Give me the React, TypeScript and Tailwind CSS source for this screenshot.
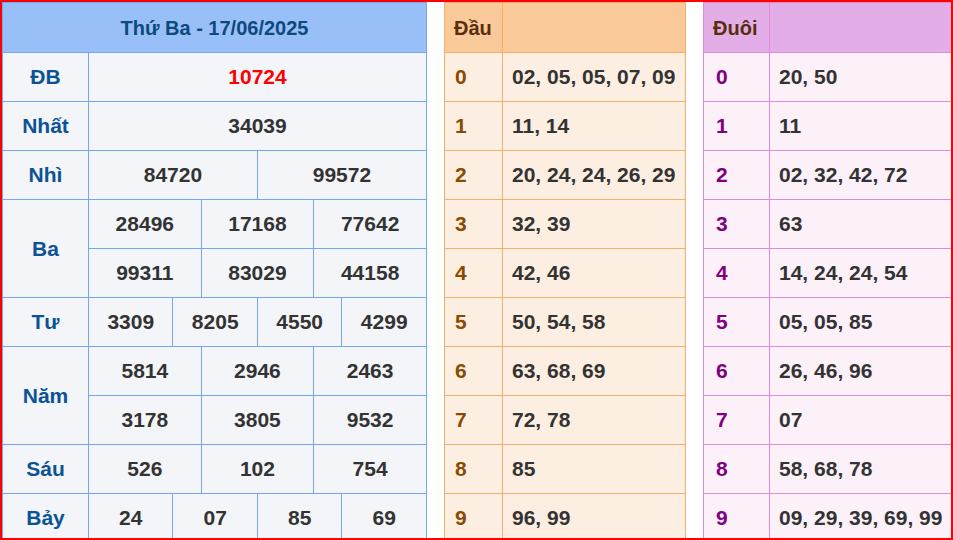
export default function App() {
  const font = { fontFamily: '"Liberation Sans", Arial, sans-serif' };
  const td = "border border-[#74a7f0] text-center h-[49px] p-0";
  const lab = td + " text-[#0b5394]";
  const num = td + " text-[#333333]";
  const C = (n: number, v: string, extra = "") => (
    <td colSpan={n} className={num + extra}>{v}</td>
  );
  const dau = [
    "02, 05, 05, 07, 09", "11, 14", "20, 24, 24, 26, 29", "32, 39", "42, 46",
    "50, 54, 58", "63, 68, 69", "72, 78", "85", "96, 99",
  ];
  const duoi = [
    "20, 50", "11", "02, 32, 42, 72", "63", "14, 24, 24, 54", "05, 05, 85",
    "26, 46, 96", "07", "58, 68, 78", "09, 29, 39, 69, 99",
  ];
  return (
    <div style={font} className="w-[953px] h-[540px] border-2 border-[#ff0000] overflow-hidden bg-white flex font-bold text-[21px]">
      <table className="w-[425px] border-collapse table-fixed shrink-0">
        <colgroup>
          <col className="w-[86px]" />
          {Array.from({ length: 12 }).map((_, i) => <col key={i} />)}
        </colgroup>
        <tbody className="bg-[#f3f5f9]">
          <tr>
            <td colSpan={13} className="border border-[#74a7f0] bg-[#99bff8] text-[#0c4a7e] text-center h-[50px] text-[20px]">Thứ Ba - 17/06/2025</td>
          </tr>
          <tr><td className={lab}>ĐB</td>{C(12, "10724", " !text-[#ff0000]")}</tr>
          <tr><td className={lab}>Nhất</td>{C(12, "34039")}</tr>
          <tr><td className={lab}>Nhì</td>{C(6, "84720")}{C(6, "99572")}</tr>
          <tr><td rowSpan={2} className={lab}>Ba</td>{C(4, "28496")}{C(4, "17168")}{C(4, "77642")}</tr>
          <tr>{C(4, "99311")}{C(4, "83029")}{C(4, "44158")}</tr>
          <tr><td className={lab}>Tư</td>{C(3, "3309")}{C(3, "8205")}{C(3, "4550")}{C(3, "4299")}</tr>
          <tr><td rowSpan={2} className={lab}>Năm</td>{C(4, "5814")}{C(4, "2946")}{C(4, "2463")}</tr>
          <tr>{C(4, "3178")}{C(4, "3805")}{C(4, "9532")}</tr>
          <tr><td className={lab}>Sáu</td>{C(4, "526")}{C(4, "102")}{C(4, "754")}</tr>
          <tr><td className={lab}>Bảy</td>{C(3, "24")}{C(3, "07")}{C(3, "85")}{C(3, "69")}</tr>
        </tbody>
      </table>
      <div className="w-[17px] shrink-0" />
      <table className="w-[242px] border-collapse table-fixed shrink-0 self-start">
        <colgroup><col className="w-[58px]" /><col /></colgroup>
        <tbody className="bg-[#fdeee2]">
          <tr className="bg-[#f9c99a] text-[#5a2d0c]">
            <td className="border border-[#f5b070] h-[50px] pl-[9px] text-[20px]">Đầu</td>
            <td className="border border-[#f5b070]"></td>
          </tr>
          {dau.map((v, i) => (
            <tr key={i}>
              <td className="border border-[#f5b070] h-[49px] pl-[10px] text-[#8a4a00]">{i}</td>
              <td className="border border-[#f5b070] pl-[9px] text-[#333333]">{v}</td>
            </tr>
          ))}
        </tbody>
      </table>
      <div className="w-[17px] shrink-0" />
      <table className="w-[250px] border-collapse table-fixed shrink-0 self-start">
        <colgroup><col className="w-[66px]" /><col /></colgroup>
        <tbody className="bg-[#fcf0f9]">
          <tr className="bg-[#e3aee8] text-[#5a2d0c]">
            <td className="border border-[#e08ad8] h-[50px] pl-[9px] text-[20px]">Đuôi</td>
            <td className="border border-[#e08ad8]"></td>
          </tr>
          {duoi.map((v, i) => (
            <tr key={i}>
              <td className="border border-[#e08ad8] h-[49px] pl-[12px] text-[#800080]">{i}</td>
              <td className="border border-[#e08ad8] pl-[9px] text-[#333333]">{v}</td>
            </tr>
          ))}
        </tbody>
      </table>
    </div>
  );
}
